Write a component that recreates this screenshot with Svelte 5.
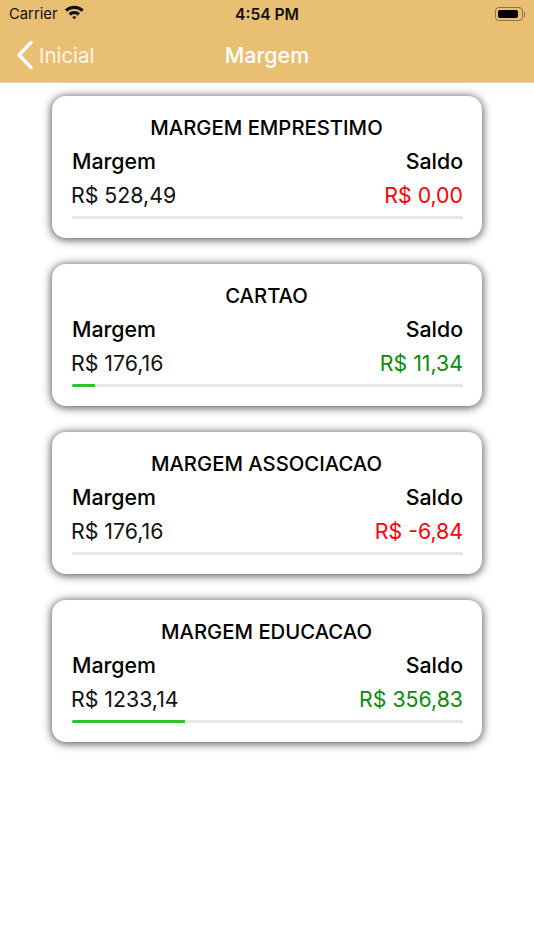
<script>
	const margens = [
		{ title: 'MARGEM EMPRESTIMO', margem: 'R$ 528,49', saldo: 'R$ 0,00', positive: false, progress: 0 },
		{ title: 'CARTAO', margem: 'R$ 176,16', saldo: 'R$ 11,34', positive: true, progress: 6 },
		{ title: 'MARGEM ASSOCIACAO', margem: 'R$ 176,16', saldo: 'R$ -6,84', positive: false, progress: 0 },
		{ title: 'MARGEM EDUCACAO', margem: 'R$ 1233,14', saldo: 'R$ 356,83', positive: true, progress: 29 }
	];
</script>

<div class="page">
	<header class="header">
		<div class="status-bar">
			<div class="status-left">
				<span>Carrier</span>
				<svg class="wifi" width="24.600" height="17.200" viewBox="0 0 20 14">
					<path d="M10 2.200c3 0 5.700 1.200 7.700 3.100l-1.800 1.900C14.400 5.700 12.300 4.800 10 4.800s-4.400.9-5.900 2.400L2.300 5.300C4.300 3.400 7 2.200 10 2.200z" />
					<path d="M10 6.600c1.800 0 3.400.7 4.600 1.800l-1.800 1.900C12 9.600 11.100 9.200 10 9.200s-2 .4-2.800 1.100L5.400 8.400C6.600 7.300 8.200 6.600 10 6.600z" />
					<path d="M10 10.700c.7 0 1.300.3 1.700.7L10 13.300l-1.700-1.900c.4-.4 1-.7 1.700-.7z" />
				</svg>
			</div>
			<span class="time">4:54 PM</span>
			<div class="battery">
				<div class="battery-body"><div class="battery-level"></div></div>
				<div class="battery-tip"></div>
			</div>
		</div>
		<nav class="nav">
			<div class="back">
				<svg width="18" height="30" viewBox="0 0 18 30">
					<path d="M15 2.500 3 15 15 27.500" fill="none" stroke="#fff" stroke-width="3.400" stroke-linecap="round" stroke-linejoin="round" />
				</svg>
				<span>Inicial</span>
			</div>
			<div class="nav-title">Margem</div>
		</nav>
	</header>

	<main class="list">
		{#each margens as item}
			<section class="card">
				<h2>{item.title}</h2>
				<div class="row labels">
					<span>Margem</span>
					<span>Saldo</span>
				</div>
				<div class="row values">
					<span>{item.margem}</span>
					<span class={item.positive ? 'positive' : 'negative'}>{item.saldo}</span>
				</div>
				<div class="track">
					<div class="fill" style="width: {item.progress}%"></div>
				</div>
			</section>
		{/each}
	</main>
</div>

<style>
	:global(body) {
		background: #fff;
		font-family: Inter, 'Liberation Sans', sans-serif;
	}

	.page {
		width: 534px;
		height: 950px;
		overflow: hidden;
		background: #fff;
	}

	.header {
		height: 83px;
		box-sizing: border-box;
		background: #e9bf73;
		border-bottom: 1px solid #e6d2a8;
	}

	.status-bar {
		height: 28px;
		padding: 0 9px;
		display: grid;
		grid-template-columns: 1fr auto 1fr;
		align-items: center;
		font-size: 14.800px;
		color: #111;
	}

	.status-left {
		display: flex;
		align-items: center;
		gap: 4px;
	}

	.wifi {
		fill: #111;
		margin-top: -4px;
	}

	.time {
		font-size: 15.600px;
		font-weight: 600;
	}

	.battery {
		justify-self: end;
		display: flex;
		align-items: center;
		gap: 1px;
	}

	.battery-body {
		width: 28px;
		height: 14px;
		box-sizing: border-box;
		border: 1px solid #8a7346;
		border-radius: 4px;
		padding: 2px;
	}

	.battery-level {
		width: 20px;
		height: 100%;
		background: #000;
		border-radius: 2px;
	}

	.battery-tip {
		width: 1px;
		height: 5px;
		background: #8a7346;
	}

	.nav {
		height: 54px;
		display: flex;
		align-items: center;
		justify-content: center;
		position: relative;
		color: #fff;
	}

	.back {
		position: absolute;
		left: 16px;
		top: 12px;
		display: flex;
		align-items: center;
		gap: 5px;
		color: #fdf6e8;
		font-size: 20.400px;
	}

	.nav-title {
		font-weight: 500;
		font-size: 21.400px;
	}

	.list {
		display: flex;
		flex-direction: column;
		gap: 26px;
		padding: 13px 52px 0;
	}

	.card {
		height: 142px;
		box-sizing: border-box;
		padding: 20px 19px 0 20px;
		background: #fff;
		border-radius: 14px;
		box-shadow: 0 1px 8px 1px rgba(0, 0, 0, 0.65);
	}

	h2 {
		margin: 0 2px 0 0;
		font-size: 20.300px;
		line-height: 24px;
		font-weight: 500;
		text-align: center;
		color: #000;
	}

	.row {
		display: flex;
		justify-content: space-between;
	}

	.labels {
		margin-top: 9px;
		font-size: 21.300px;
		line-height: 24px;
		font-weight: 500;
		color: #000;
	}

	.values {
		margin: 10px 0 0 -1px;
		font-size: 21.300px;
		line-height: 24px;
		color: #111;
	}

	.positive {
		color: #0a8a0a;
	}

	.negative {
		color: #fb0007;
	}

	.track {
		margin-top: 9px;
		height: 3px;
		background: #e6e6e6;
		border-radius: 2px;
		overflow: hidden;
	}

	.fill {
		height: 100%;
		background: #2fc22f;
	}
</style>
